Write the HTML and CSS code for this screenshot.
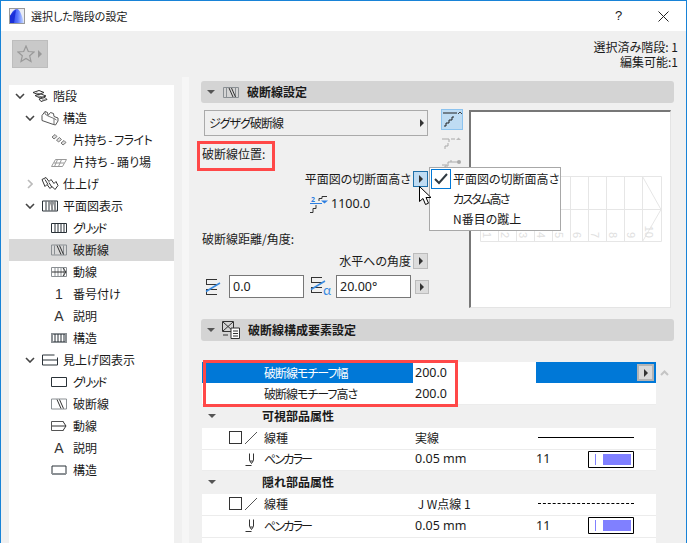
FILE: index.html
```html
<!DOCTYPE html>
<html lang="ja">
<head>
<meta charset="utf-8">
<title>選択した階段の設定</title>
<link rel="stylesheet" href="styles.css">
</head>
<body>
<svg class="defs" width="0" height="0">
  <defs>
    <linearGradient id="appg" x1="0" x2="1" y1="0" y2="0"><stop offset="0" stop-color="#1a2fd8"/><stop offset=".55" stop-color="#5a78ff"/><stop offset="1" stop-color="#cfe0ff"/></linearGradient>
    <symbol id="chev-down" viewBox="0 0 10 6"><path d="M1 1l4 4 4-4" fill="none" stroke="#444" stroke-width="1.6"/></symbol>
    <symbol id="chev-right" viewBox="0 0 6 10"><path d="M1 1l4 4-4 4" fill="none" stroke="#bbb" stroke-width="1.6"/></symbol>
    <symbol id="stair" viewBox="0 0 16 12"><path d="M1 2.500l6-2 5 2-6 2zM3 5.500l6-1.500 5 2-6 2zM7 9l6-1.500 2 2-6 2z" fill="#fff" stroke="#333"/><path d="M4 3l5 1M6 6l5 1M10 10l3 0" stroke="#777"/></symbol>
    <symbol id="struct" viewBox="0 0 18 16"><path d="M1 5.500l3-4 2.500 1 .5 3 2.500-3 3 1 .5 3 4 1.500v3l-2.500 4-3.500-1-10-3.500z" fill="#fff" stroke="#555"/><path d="M4 1.500v2.500l3 2 6 2.500 2.500 1.500M13 8.500v6" fill="none" stroke="#777"/></symbol>
    <symbol id="cant1" viewBox="0 0 16 12"><path d="M1 3l3-2.500 2 2-3 2.500zM5.500 6l3-2.500 2 2-3 2.500zM10 9l3-2.500 2 2-3 2.500z" fill="#ddd" stroke="#777"/></symbol>
    <symbol id="cant2" viewBox="0 0 16 10"><path d="M.5 9.500l4-7h11l-4 7z" fill="#fff" stroke="#999"/><path d="M6.500 2.500l-3 7M10.500 2.500l-3 7M3 6h10" stroke="#999" fill="none"/></symbol>
    <symbol id="finish" viewBox="0 0 18 15"><path d="M1 3l4-2 3 4 2-2 3 4 2-2 2 4-3 4-3-3-2 2-3-4-2 2z" fill="#fff" stroke="#333"/><path d="M4 3l3 5M8 6l3 5" stroke="#333"/></symbol>
    <symbol id="plan" viewBox="0 0 16 11"><path d="M.5.500h15v10H.5z" fill="#fff" stroke="#2a3238"/><path d="M4 1v9M7 1v9M10 1v9M13 1v9" stroke="#2a3238"/><path d="M8 1l3 9M11 1l3 9" stroke="#888"/></symbol>
    <symbol id="grid" viewBox="0 0 16 10"><path d="M.5.500h15v9H.5z" fill="#fff" stroke="#2a3238"/><path d="M4 1v8M7 1v8M10 1v8M13 1v8" stroke="#2a3238"/></symbol>
    <symbol id="brk" viewBox="0 0 16 11"><path d="M.5.500h15v10H.5z" fill="none" stroke="#8a8f93"/><path d="M3.500 1v9M12.500 1v9" stroke="#8a8f93"/><path d="M6 1l4 9M8.500 1l4 9" stroke="#333" fill="none"/></symbol>
    <symbol id="walk" viewBox="0 0 16 10"><path d="M.5.500h15v9H.5z" fill="#fff" stroke="#8a8f93"/><path d="M4 1v8M7 1v8M10 1v8M13 1v8" stroke="#8a8f93"/><path d="M1 5h14M12 1l3 4-3 4" stroke="#333" fill="none"/></symbol>
    <symbol id="grid-s" viewBox="0 0 16 10"><path d="M1 1h14v8H1z" fill="#fff" stroke="#8a8f93" stroke-width="2"/><path d="M4 1v8M7 1v8M10 1v8M13 1v8" stroke="#2a3238"/></symbol>
    <symbol id="rect" viewBox="0 0 16 10"><path d="M.5.500h15v9H.5z" fill="#fff" stroke="#2a3238"/></symbol>
    <symbol id="rbrk" viewBox="0 0 16 11"><path d="M.5.500h15v10H.5z" fill="#fff" stroke="#8a8f93"/><path d="M6 1l4 9M8.500 1l4 9" stroke="#333" fill="none"/></symbol>
    <symbol id="rwalk" viewBox="0 0 16 10"><path d="M.5 9.500V.5h12M.5 9.500h12" fill="none" stroke="#555"/><path d="M1 5h14M12 .5l3 4.500-3 4.500" stroke="#333" fill="none"/></symbol>
    <symbol id="rhead" viewBox="0 0 16 11"><path d="M12.500.500H.5v10h15V3" fill="none" stroke="#2a3238"/><path d="M1 5.500h14" stroke="#2a3238"/></symbol>
    <symbol id="rstruct" viewBox="0 0 16 10"><path d="M1 1h14v8H1z" fill="#fff" stroke="#2a3238"/><path d="M1 9h14" stroke="#8a8f93" stroke-width="2"/></symbol>
    <symbol id="pen" viewBox="0 0 12 13"><path d="M4.500.5v7l2 3 2-3v-7M.5 12.500h6" fill="none" stroke="#333"/><path d="M5 8h3" stroke="#333"/></symbol>
    <symbol id="swatch" viewBox="0 0 46 17"><path d="M.5.500h45v16H.5z" fill="#fff" stroke="#000"/><path d="M7.500 3v11" stroke="#8080ff"/><path d="M15 3h28v11H15z" fill="#8080ff"/></symbol>
    <symbol id="angle1" viewBox="0 0 17 16"><path d="M1 .5h11M1.500 .5v5M1 5.500h11M1 10.500h11M1.500 10.500v5M1 15.500h11" fill="none" stroke="#333"/><path d="M1 12.500L15 4" stroke="#3b8be0" stroke-width="1.500"/></symbol>
  </defs>
</svg>
<div class="window">
  <header class="titlebar">
    <svg class="app-icon" viewBox="0 0 16 16"><rect x=".5" y=".5" width="15" height="15" fill="#e9ecf4" stroke="#999"/><path d="M1 15V8C3 4 5 1 8 1c3 0 5 7 7 14z" fill="url(#appg)"/><path d="M1 8L7 1.500 5 15H1z" fill="#1a2fd8"/></svg>
    <span class="title">選択した階段の設定</span>
    <span class="help">?</span>
    <svg class="close" viewBox="0 0 11 11"><path d="M.5.500l10 10M10.500.500l-10 10" stroke="#222" fill="none"/></svg>
  </header>
  <div class="topbar">
    <div class="fav">
      <svg class="fav-star" viewBox="0 0 18 18"><path d="M9 1l2.300 5.500 5.700.5-4.300 3.800 1.300 5.700-5-3-5 3 1.300-5.700L1 7l5.700-.5z" fill="none" stroke="#999" stroke-width="1.200"/></svg>
      <span class="fav-arrow"></span>
    </div>
    <div class="stats">
      <div>選択済み階段: 1</div>
      <div>編集可能:1</div>
    </div>
  </div>
  <div class="content">
    <nav class="tree">
      <div class="row l0"><svg class="chev"><use href="#chev-down"/></svg><svg class="ic"><use href="#stair"/></svg><span>階段</span></div>
      <div class="row l1"><svg class="chev"><use href="#chev-down"/></svg><svg class="ic ic-big"><use href="#struct"/></svg><span>構造</span></div>
      <div class="row l2"><svg class="chev"></svg><svg class="ic"><use href="#cant1"/></svg><span class="cond-s">片持ち - フライト</span></div>
      <div class="row l2"><svg class="chev"></svg><svg class="ic"><use href="#cant2"/></svg><span>片持ち - 踊り場</span></div>
      <div class="row l1"><svg class="chev chev-r"><use href="#chev-right"/></svg><svg class="ic ic-big"><use href="#finish"/></svg><span>仕上げ</span></div>
      <div class="row l1"><svg class="chev"><use href="#chev-down"/></svg><svg class="ic"><use href="#plan"/></svg><span>平面図表示</span></div>
      <div class="row l2"><svg class="chev"></svg><svg class="ic"><use href="#grid"/></svg><span class="cond-l">グリッド</span></div>
      <div class="row l2 sel"><svg class="chev"></svg><svg class="ic"><use href="#brk"/></svg><span>破断線</span></div>
      <div class="row l2"><svg class="chev"></svg><svg class="ic"><use href="#walk"/></svg><span>動線</span></div>
      <div class="row l2"><svg class="chev"></svg><span class="ic gl">1</span><span>番号付け</span></div>
      <div class="row l2"><svg class="chev"></svg><span class="ic gl">A</span><span>説明</span></div>
      <div class="row l2"><svg class="chev"></svg><svg class="ic"><use href="#grid-s"/></svg><span>構造</span></div>
      <div class="row l1"><svg class="chev"><use href="#chev-down"/></svg><svg class="ic"><use href="#rhead"/></svg><span>見上げ図表示</span></div>
      <div class="row l2"><svg class="chev"></svg><svg class="ic"><use href="#rect"/></svg><span class="cond-l">グリッド</span></div>
      <div class="row l2"><svg class="chev"></svg><svg class="ic"><use href="#rbrk"/></svg><span>破断線</span></div>
      <div class="row l2"><svg class="chev"></svg><svg class="ic"><use href="#rwalk"/></svg><span>動線</span></div>
      <div class="row l2"><svg class="chev"></svg><span class="ic gl">A</span><span>説明</span></div>
      <div class="row l2"><svg class="chev"></svg><svg class="ic"><use href="#rstruct"/></svg><span>構造</span></div>
    </nav>
    <div class="strip"></div>
    <main class="main">
      <div class="sec-head">
        <span class="tri"></span>
        <svg class="sec-ic"><use href="#brk"/></svg>
        <b>破断線設定</b>
      </div>
      <div class="settings">
        <div class="form">
          <div class="dropdown"><span class="cond-m">ジグザグ破断線</span><span class="arrow"></span></div>
          <div class="lbl lbl-pos">破断線位置:</div>
          <div class="line-r line-cut"><span>平面図の切断面高さ</span><span class="mini active"><span class="arrow"></span></span></div>
          <div class="height">
            <svg class="height-ic" viewBox="0 0 18 17"><text x="1" y="6" class="ht-num">2</text><path d="M0 7.500h12" stroke="#2e7fe0"/><path d="M9 5V2.500h3V.5h5M0 16.500h3v-4h3V9" fill="none" stroke="#333"/><path d="M11 4.500h7l-3.500 3z" fill="#2e7fe0"/></svg>
            <span class="num">1100.0</span>
          </div>
          <div class="lbl lbl-dist">破断線距離/角度:</div>
          <div class="line-r line-ang"><span>水平への角度</span><span class="mini"><span class="arrow"></span></span></div>
          <div class="inputs">
            <svg class="in-ic"><use href="#angle1"/></svg>
            <div class="input in-a num">0.0</div>
            <div class="in-ic2">
              <svg class="in-ic"><use href="#angle1"/></svg><span class="alpha">α</span>
            </div>
            <div class="input in-b num">20.00°</div>
            <span class="mini mini-s"><span class="arrow"></span></span>
          </div>
        </div>
        <div class="tools">
          <div class="tool on"><svg viewBox="0 0 20 17" class="tool-ic"><path d="M1 2h14" stroke="#222"/><path d="M2 15h2v-3h3V9h3V6h2" fill="none" stroke="#222"/><path d="M16 3l2-2 2 2" fill="none" stroke="#444"/></svg></div>
          <div class="tool t2"><svg viewBox="0 0 20 13" class="tool-ic2"><path d="M0 2h7l0 3M13 2H9M3 12V9h3V6" fill="none" stroke="#aaa"/><path d="M14 3l2.500-2.500L19 3z" fill="#bbb"/></svg></div>
          <div class="tool t3"><svg viewBox="0 0 20 11" class="tool-ic3"><path d="M0 6h5M3 10V7h3V3h3V1M9 3h7" fill="none" stroke="#aaa"/><circle cx="17" cy="3" r="2" fill="#aaa"/></svg></div>
        </div>
        <div class="preview">
          <svg class="plan-svg" viewBox="0 0 182 66">
            <g class="pl">
              <path d="M.5.500h181v65H.5zM.5 33.500h181M18.500.5v65M36.500.5v65M54.500.5v65M72.500.5v65M90.500.5v65M108.500.5v65M126.500.5v65M144.500.5v65M162.500.5v65M162.500.5L181 33.500 162.500 65.500"/>
            </g>
            <g class="pn">
              <text transform="translate(3 62) rotate(90)">1</text>
              <text transform="translate(21 62) rotate(90)">2</text>
              <text transform="translate(39 62) rotate(90)">3</text>
              <text transform="translate(57 62) rotate(90)">4</text>
              <text transform="translate(75 62) rotate(90)">5</text>
              <text transform="translate(93 62) rotate(90)">6</text>
              <text transform="translate(111 62) rotate(90)">7</text>
              <text transform="translate(129 62) rotate(90)">8</text>
              <text transform="translate(147 62) rotate(90)">9</text>
              <text transform="translate(165 62) rotate(90)">10</text>
            </g>
          </svg>
        </div>
      </div>
      <div class="sec-head sec2">
        <span class="tri"></span>
        <svg class="sec-ic2" viewBox="0 0 18 18"><path d="M.5.500h11v10H.5zM1 1l10 9M11 1L1 10" fill="none" stroke="#333"/><path d="M9 7h8.500v10.500H9z" fill="#fff" stroke="#333"/><path d="M11 10h5M11 12.500h5M11 15h5M1 14h5" stroke="#333"/></svg>
        <b>破断線構成要素設定</b>
      </div>
      <div class="table-wrap">
        <div class="table">
          <div class="tr t-sel">
            <div class="c-icons"></div>
            <div class="c-name cond-m">破断線モチーフ幅</div>
            <div class="c-val num">200.0</div>
            <div class="c-end"><span class="mini mini-t"><span class="arrow"></span></span></div>
          </div>
          <div class="tr">
            <div class="c-icons"></div>
            <div class="c-name cond-m">破断線モチーフ高さ</div>
            <div class="c-val num">200.0</div>
            <div class="c-end"></div>
          </div>
          <div class="tr t-group"><span class="tri"></span><b>可視部品属性</b></div>
          <div class="tr">
            <div class="c-icons"><span class="box"></span><svg class="slash" viewBox="0 0 12 12"><path d="M0 12L12 0" stroke="#555"/></svg></div>
            <div class="c-name">線種</div>
            <div class="c-val">実線</div>
            <div class="c-end"><span class="ln solid"></span></div>
          </div>
          <div class="tr tr-short">
            <div class="c-icons"><svg class="pen"><use href="#pen"/></svg></div>
            <div class="c-name cond-l">ペンカラー</div>
            <div class="c-val num">0.05 mm</div>
            <div class="c-end c-pen"><span class="num">11</span><svg class="swatch"><use href="#swatch"/></svg></div>
          </div>
          <div class="tr t-group"><span class="tri"></span><b>隠れ部品属性</b></div>
          <div class="tr">
            <div class="c-icons"><span class="box"></span><svg class="slash" viewBox="0 0 12 12"><path d="M0 12L12 0" stroke="#555"/></svg></div>
            <div class="c-name">線種</div>
            <div class="c-val">&nbsp;J W点線 1</div>
            <div class="c-end"><span class="ln dash"></span></div>
          </div>
          <div class="tr">
            <div class="c-icons"><svg class="pen"><use href="#pen"/></svg></div>
            <div class="c-name cond-l">ペンカラー</div>
            <div class="c-val num">0.05 mm</div>
            <div class="c-end c-pen"><span class="num">11</span><svg class="swatch"><use href="#swatch"/></svg></div>
          </div>
        </div>
        <div class="scroll"><svg class="scroll-up" viewBox="0 0 9 6"><path d="M1 5l3.500-3.500L8 5" fill="none" stroke="#c4c4c4" stroke-width="2"/></svg></div>
      </div>
    </main>
  </div>
  <div class="red red-a"></div>
  <div class="red red-b"></div>
  <div class="menu">
    <div class="mi"><span class="check"><svg viewBox="0 0 14 12"><path d="M1 6l4 4 8-9" fill="none" stroke="#2f3a42" stroke-width="2"/></svg></span>平面図の切断面高さ</div>
    <div class="mi cond-l">カスタム高さ</div>
    <div class="mi">N番目の蹴上</div>
  </div>
  <svg class="cursor" viewBox="0 0 16 20"><path d="M.5.500v15l3.500-3 2.500 6 3-1.300-2.500-5.700h5z" fill="#fff" stroke="#000"/></svg>
</div>
</body>
</html>
```
FILE: styles.css
```css
* { box-sizing: border-box; }
html, body { margin: 0; padding: 0; }
body { width: 687px; height: 543px; overflow: hidden; font: 12px/16px "Noto Sans CJK JP", "Noto Sans", sans-serif; font-feature-settings: "palt"; color: #1a1a1a; background: #f0f0f0; }
.defs { position: absolute; }
b { font-weight: 700; }
.num { font-family: "Noto Sans", "Noto Sans CJK JP", sans-serif; font-size: 12.5px; }
.cond-s { letter-spacing: -.5px; }
.cond-m { letter-spacing: -1px; }
.cond-l { letter-spacing: -1.8px; }

.window { position: relative; width: 687px; height: 543px; border: 1px solid #1883d7; border-bottom: 0; background: #f0f0f0; overflow: hidden; display: flex; flex-direction: column; }
.titlebar { height: 30px; flex: none; background: #fff; display: flex; align-items: center; padding-left: 8px; }
.app-icon { width: 16px; height: 16px; }
.title { margin-left: 6px; font-size: 11px; flex: 1; }
.help { width: 12px; margin-right: 31px; font-family: "Liberation Sans", sans-serif; font-size: 13px; }
.close { width: 11px; height: 11px; margin-right: 17px; }

.topbar { height: 46px; flex: none; position: relative; display: flex; justify-content: space-between; padding: 9px 8px 0 11px; }
.fav { width: 36px; height: 28px; background: #c9c9c9; border: 1px solid #bdbdbd; display: flex; align-items: center; padding-left: 4px; }
.fav-star { width: 18px; height: 18px; }
.fav-arrow { margin-left: 3px; border-left: 4px solid #999; border-top: 4px solid transparent; border-bottom: 4px solid transparent; }
.stats { text-align: right; line-height: 15px; margin-top: -1px; font-size: 12px; }

.content { flex: 1; display: flex; min-height: 0; position: relative; }
.tree { width: 165px; margin: 8px 0 0 8px; background: #fff; flex: none; }
.row { height: 22px; display: flex; align-items: center; white-space: nowrap; }
.l0 { padding-left: 6px; }
.l1 { padding-left: 16px; }
.l2 { padding-left: 26px; }
.sel { background: #d8d8d8; }
.chev { width: 10px; height: 6px; margin-right: 7px; flex: none; }
.chev-r { width: 6px; height: 10px; margin: 0 9px 0 2px; }
.ic { width: 16px; height: 12px; margin-right: 5px; flex: none; }
.ic-big { width: 18px; height: 16px; margin-left: -1px; margin-right: 4px; }
.l2 .ic { width: 16px; margin-left: -1px; margin-right: 6px; }
.gl { font-family: "Liberation Sans", sans-serif; font-size: 14px; line-height: 12px; text-align: center; color: #333; }

.strip { width: 7px; margin-left: 8px; background: #f6f6f6; flex: none; }
.main { margin-top: -1px; padding-top: 5px; display: flex; flex-direction: column; min-width: 0; margin-left: 12px; width: 473px; flex: none; }
.sec-head { height: 22px; flex: none; background: #d4d4d4; border-radius: 3px; display: flex; align-items: center; padding-left: 6px; }
.sec-head b { font-size: 12px; margin-left: 8px; }
.tri { width: 0; height: 0; border-top: 4px solid #555; border-left: 4px solid transparent; border-right: 4px solid transparent; flex: none; }
.sec-ic { width: 16px; height: 11px; margin-left: 8px; }
.sec-ic2 { width: 18px; height: 18px; margin-left: 7px; }

.settings { height: 216px; flex: none; display: flex; padding: 7px 2px 0 3px; }
.form { width: 237px; flex: none; }
.dropdown { height: 26px; width: 224px; background: #efefef; border: 1px solid #aaa; display: flex; justify-content: space-between; align-items: center; padding: 0 3px 0 4px; }
.arrow { display: inline-block; border-left: 4px solid #333; border-top: 4px solid transparent; border-bottom: 4px solid transparent; }
.lbl { white-space: nowrap; margin-left: -2px; }
.lbl-pos { margin-top: 10px; }
.line-r { display: flex; justify-content: flex-end; align-items: center; gap: 2px; width: 224px; height: 16px; }
.line-cut { margin-top: 9px; }
.mini { width: 15px; height: 16px; background: #dcdcdc; border: 1px solid #bcbcbc; display: flex; align-items: center; justify-content: center; flex: none; }
.mini.active { background: #bfdcf3; border-color: #1f6fa8; }
.height { display: flex; align-items: center; margin: 8px 0 0 106px; height: 18px; gap: 3px; }
.height-ic { width: 18px; height: 17px; }
.ht-num { font: 700 7px "Noto Sans", sans-serif; fill: #2e7fe0; }
.lbl-dist { margin-top: 18px; }
.line-ang { margin-top: 6px; }
.inputs { display: flex; align-items: center; margin-top: 6px; height: 23px; }
.in-ic { width: 17px; height: 16px; margin-left: 1px; flex: none; }
.input { height: 23px; width: 75px; background: #fff; border: 1px solid #777; padding: 3px 3px; flex: none; }
.in-a { margin-left: 7px; }
.in-ic2 { width: 27px; height: 20px; display: flex; margin-left: 5px; }
.alpha { color: #3b8be0; font-size: 13px; line-height: 16px; margin: 5px 0 0 -4px; }
.mini-s { width: 14px; height: 14px; margin-left: 4px; }

.tools { width: 22px; flex: none; margin-top: -1px; }
.tool { width: 22px; display: flex; align-items: center; justify-content: center; }
.tool.on { height: 21px; background: #bfdcf3; border: 1px solid #8cc3ef; }
.tool-ic { width: 20px; height: 17px; }
.t2 { margin-top: 6px; height: 14px; }
.tool-ic2 { width: 20px; height: 13px; }
.t3 { margin-top: 9px; height: 11px; }
.tool-ic3 { width: 20px; height: 11px; }
.preview { width: 202px; height: 198px; margin-left: 6px; background: #fff; border-top: 2px solid #777; border-left: 2px solid #777; border-right: 1px solid #e4e4e4; border-bottom: 1px solid #e4e4e4; padding: 64px 0 0 9px; flex: none; }
.plan-svg { width: 182px; height: 66px; display: block; }
.pl path { fill: none; stroke: #e6e6e6; }
.pn text { font: 11px "Liberation Sans", sans-serif; fill: #e0e0e0; text-anchor: end; }

.table-wrap { flex: 1; display: flex; margin-top: 21px; min-height: 0; padding-left: 1px; }
.table { width: 454px; background: #fff; flex: none; }
.scroll { flex: 1; padding: 8px 0 0 4px; }
.scroll-up { width: 9px; height: 6px; display: block; }
.tr { height: 22px; display: flex; align-items: center; background: #fff; border-bottom: 1px solid #ececec; white-space: nowrap; }
.tr:first-child { height: 21px; border: 0; }
.t-group ~ .tr { padding-bottom: 2px; }
.tr-short { height: 21px; }
.t-group, .t-group ~ .t-group { height: 23px; background: #f0f0f0; border: 0; padding-left: 6px; padding-bottom: 2px; }
.t-group b { margin-left: 46px; }
.c-icons { width: 62px; display: flex; align-items: center; padding-left: 27px; flex: none; height: 100%; }
.box { width: 13px; height: 13px; border: 1px solid #333; margin-right: 3px; flex: none; }
.slash { width: 12px; height: 12px; }
.pen { width: 12px; height: 13px; margin-left: 16px; }
.c-name { width: 149px; flex: none; }
.c-val { width: 123px; flex: none; padding-left: 2px; }
.c-end { flex: 1; display: flex; align-items: center; height: 100%; }
.t-sel .c-icons, .t-sel .c-name, .t-sel .c-end { background: #0078d7; color: #fff; display: flex; align-items: center; height: 100%; }
.t-sel .c-end { justify-content: flex-end; padding-right: 2px; }
.mini-t { width: 17px; height: 17px; background: #d9d9d9; border: 2px solid #b4b4b4; }
.ln { display: block; width: 96px; height: 0; margin-left: 2px; }
.solid { border-top: 1px solid #000; }
.dash { border-top: 1px dashed #000; }
.c-pen { padding-right: 22px; }
.swatch { width: 46px; height: 17px; margin-left: auto; }

.red { position: absolute; border: 3px solid #ff4848; }
.red-a { left: 196px; top: 140px; width: 78px; height: 30px; }
.red-b { left: 202px; top: 359px; width: 255px; height: 47px; }
.menu { position: absolute; left: 428px; top: 166px; width: 132px; height: 64px; background: #fff; border: 1px solid #a8a8a8; padding: 1px 0 0 23px; }
.mi { height: 20px; line-height: 20px; white-space: nowrap; position: relative; }
.check { position: absolute; left: -22px; top: 0; width: 20px; height: 20px; border: 1px solid #0078d7; display: flex; align-items: center; justify-content: center; }
.check svg { width: 14px; height: 12px; }
.cursor { position: absolute; left: 418px; top: 185px; width: 16px; height: 20px; }
```
